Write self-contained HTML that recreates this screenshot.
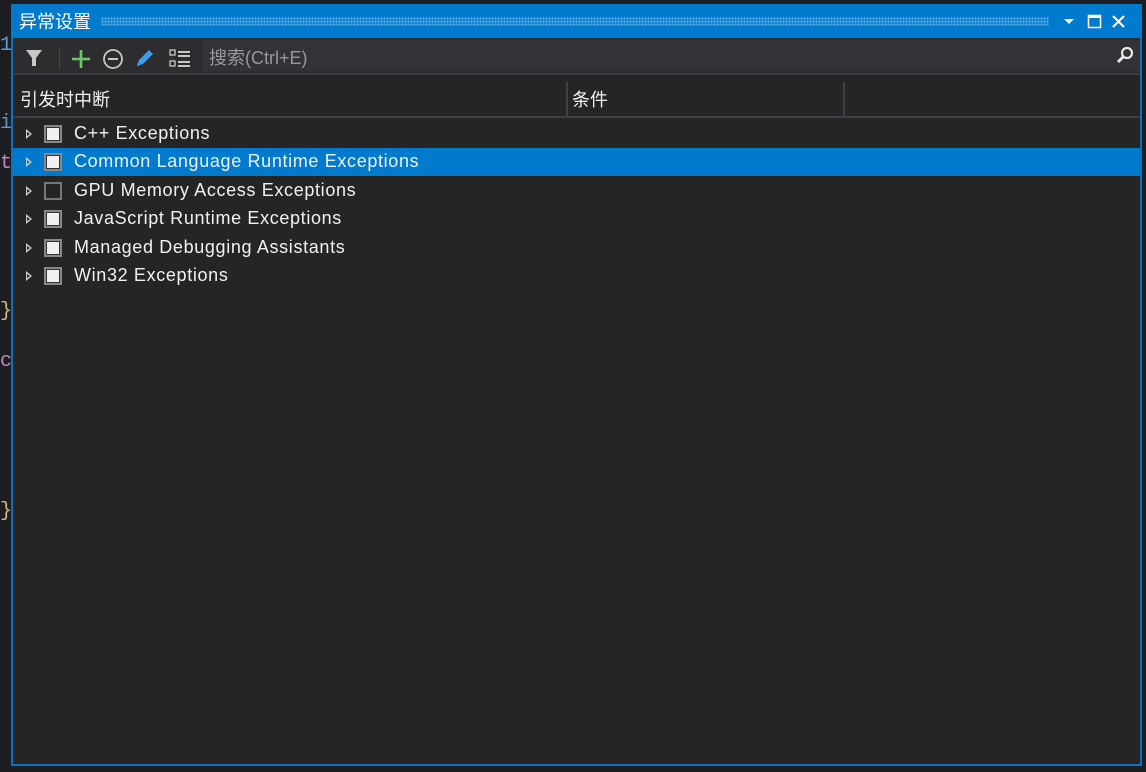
<!DOCTYPE html>
<html><head><meta charset="utf-8"><style>
*{margin:0;padding:0;box-sizing:border-box}
body{width:1146px;height:772px;background:#1b1d20;position:relative;overflow:hidden;font-family:"Liberation Sans","Noto Sans CJK SC",sans-serif;color:#f1f1f1}
.bgtxt{position:absolute;left:0;font-size:20px;font-family:"Liberation Mono",monospace}
#win{position:absolute;left:11px;top:4px;width:1131px;height:762px;border:2px solid #0e70c0;border-top:0;background:#252526}
#title{position:absolute;left:-2px;top:0;width:1131px;height:34px;background:#007acc}
#title .t{position:absolute;left:8px;top:4px;font-size:18px;color:#fff}
#dots{position:absolute;left:90px;top:13px;width:948px;height:9px;background-image:radial-gradient(circle,#62b0e8 1px,transparent 1.3px);background-size:3px 3px}
#tb{position:absolute;left:0;top:34px;width:1127px;height:37px;background:#2d2d30;border-bottom:2px solid #3a3a3e}
#search{position:absolute;left:190px;top:2px;width:937px;height:31px;background:#333337}
#search span{position:absolute;left:6px;top:4px;font-size:18px;color:#999}
#hdr{position:absolute;left:0;top:76px;width:1127px;height:38px;border-bottom:2px solid #3f3f46}
#hdr span{position:absolute;top:6px;font-size:18px;color:#f1f1f1}
.vs{position:absolute;top:2px;width:2px;height:36px;background:#3f3f46}
.row{position:absolute;left:0;width:1127px;height:28px;font-size:18px;letter-spacing:0.65px}
.row.sel{background:#007acc}
.row .tri{position:absolute;left:13px;top:9px;width:0;height:0;border-left:6px solid #ccc;border-top:5px solid transparent;border-bottom:5px solid transparent}
.row .tri:after{content:"";position:absolute;left:-5px;top:-2px;border-left:3px solid #252526;border-top:2px solid transparent;border-bottom:2px solid transparent}
.row.sel .tri:after{border-left-color:#007acc}
.row .cb{position:absolute;left:31px;top:5px;width:18px;height:18px;border:2px solid #888;background:#f1f1f1;box-shadow:inset 0 0 0 1px #333}
.row .cb.off{background:#252526;box-shadow:none;border-color:#777}
.row .l{position:absolute;left:61px;top:3px;color:#f1f1f1}
</style></head><body>
<div class="bgtxt" style="top:34px;color:#569cd6">1</div>
<div class="bgtxt" style="top:112px;color:#569cd6">i</div>
<div class="bgtxt" style="top:152px;color:#c586c0">t</div>
<div class="bgtxt" style="top:300px;color:#d7ba7d">}</div>
<div class="bgtxt" style="top:350px;color:#c586c0">c</div>
<div class="bgtxt" style="top:500px;color:#d7ba7d">}</div>
<div id="win">
 <div id="title"><span class="t">异常设置</span><div id="dots"></div>
  <svg style="position:absolute;left:1050px;top:10px" width="70" height="16">
   <path d="M3 5 L13 5 L8 10 Z" fill="#fff"/>
   <rect x="27.5" y="1.5" width="12" height="12" fill="none" stroke="#fff" stroke-width="1.5"/><rect x="27" y="1" width="13" height="3" fill="#fff"/>
   <path d="M52 2 L63 13 M63 2 L52 13" stroke="#fff" stroke-width="2"/>
  </svg>
 </div>
 <div id="tb">
  <svg style="position:absolute;left:12px;top:10px" width="170" height="22">
   <path d="M1 2 L17 2 L11 10 L11 18 L7 18 L7 10 Z" fill="#c8c8c8"/>
   <rect x="34" y="0" width="1" height="22" fill="#46464a"/>
   <path d="M47 11 L65 11 M56 2 L56 20" stroke="#6cc86c" stroke-width="2.6"/>
   <circle cx="88" cy="11" r="9" fill="none" stroke="#c8c8c8" stroke-width="1.8"/><path d="M83 11 L93 11" stroke="#c8c8c8" stroke-width="2"/>
   <path d="M112 18 L114 12 L124 2 L128 6 L118 16 Z" fill="#3d9bf0"/><path d="M112 18 L113 15 L115 17Z" fill="#3d9bf0"/>
   <rect x="145" y="2" width="5" height="5" fill="none" stroke="#c8c8c8" stroke-width="1.3"/><rect x="145" y="13" width="5" height="5" fill="none" stroke="#c8c8c8" stroke-width="1.3"/>
   <path d="M153 4 L165 4 M153 8 L165 8 M153 14 L165 14 M153 18 L165 18" stroke="#c8c8c8" stroke-width="2"/>
  </svg>
  <div id="search"><span>搜索(Ctrl+E)</span>
   <svg style="position:absolute;right:5px;top:6px" width="20" height="20"><circle cx="12" cy="7" r="5" fill="none" stroke="#e8e8e8" stroke-width="2.2"/><path d="M8.5 10.5 L3 16" stroke="#e8e8e8" stroke-width="3"/></svg>
  </div>
 </div>
 <div id="hdr"><span style="left:7px">引发时中断</span><div class="vs" style="left:553px"></div><span style="left:559px">条件</span><div class="vs" style="left:830px"></div></div>
 <div class="row" style="top:116px"><div class="tri"></div><div class="cb"></div><span class="l">C++ Exceptions</span></div>
 <div class="row sel" style="top:144px"><div class="tri"></div><div class="cb"></div><span class="l">Common Language Runtime Exceptions</span></div>
 <div class="row" style="top:173px"><div class="tri"></div><div class="cb off"></div><span class="l">GPU Memory Access Exceptions</span></div>
 <div class="row" style="top:201px"><div class="tri"></div><div class="cb"></div><span class="l">JavaScript Runtime Exceptions</span></div>
 <div class="row" style="top:230px"><div class="tri"></div><div class="cb"></div><span class="l">Managed Debugging Assistants</span></div>
 <div class="row" style="top:258px"><div class="tri"></div><div class="cb"></div><span class="l">Win32 Exceptions</span></div>
</div>
</body></html>
